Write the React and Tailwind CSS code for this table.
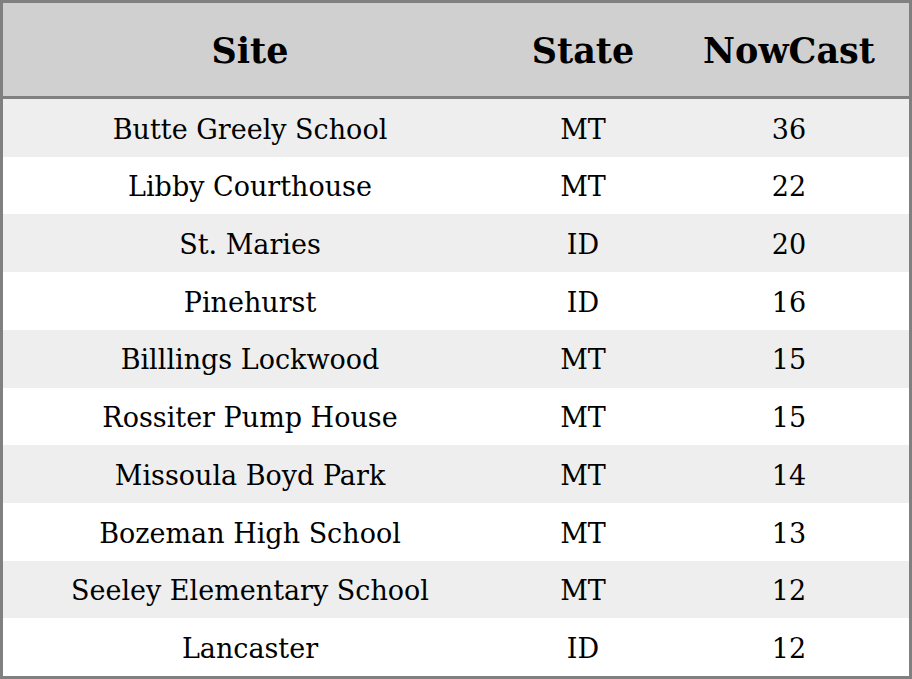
import React from 'react';

const rows = [
  ['Butte Greely School', 'MT', 36],
  ['Libby Courthouse', 'MT', 22],
  ['St. Maries', 'ID', 20],
  ['Pinehurst', 'ID', 16],
  ['Billlings Lockwood', 'MT', 15],
  ['Rossiter Pump House', 'MT', 15],
  ['Missoula Boyd Park', 'MT', 14],
  ['Bozeman High School', 'MT', 13],
  ['Seeley Elementary School', 'MT', 12],
  ['Lancaster', 'ID', 12],
];

export default function App() {
  return (
    <div
      className="w-[912px] h-[679px] border-[3px] border-[#808080] bg-white text-black flex flex-col"
      style={{ fontFamily: "'DejaVu Serif', serif" }}
    >
      {/* header */}
      <div className="h-[96px] flex items-center pt-[4px] bg-[#d0d0d0] border-b-[3px] border-[#808080] font-bold text-[35px] shrink-0">
        <div className="w-[494px] text-center">Site</div>
        <div className="w-[172px] text-center">State</div>
        <div className="flex-1 text-center">NowCast</div>
      </div>

      {/* rows */}
      <div className="flex-1 flex flex-col">
        {rows.map(([site, state, value], i) => (
          <div
            key={site}
            className={`flex-1 flex items-center pt-[4px] text-[27px] ${i % 2 === 0 ? 'bg-[#eeeeee]' : 'bg-white'}`}
          >
            <div className="w-[494px] text-center">{site}</div>
            <div className="w-[172px] text-center">{state}</div>
            <div className="flex-1 text-center">{value}</div>
          </div>
        ))}
      </div>
    </div>
  );
}
